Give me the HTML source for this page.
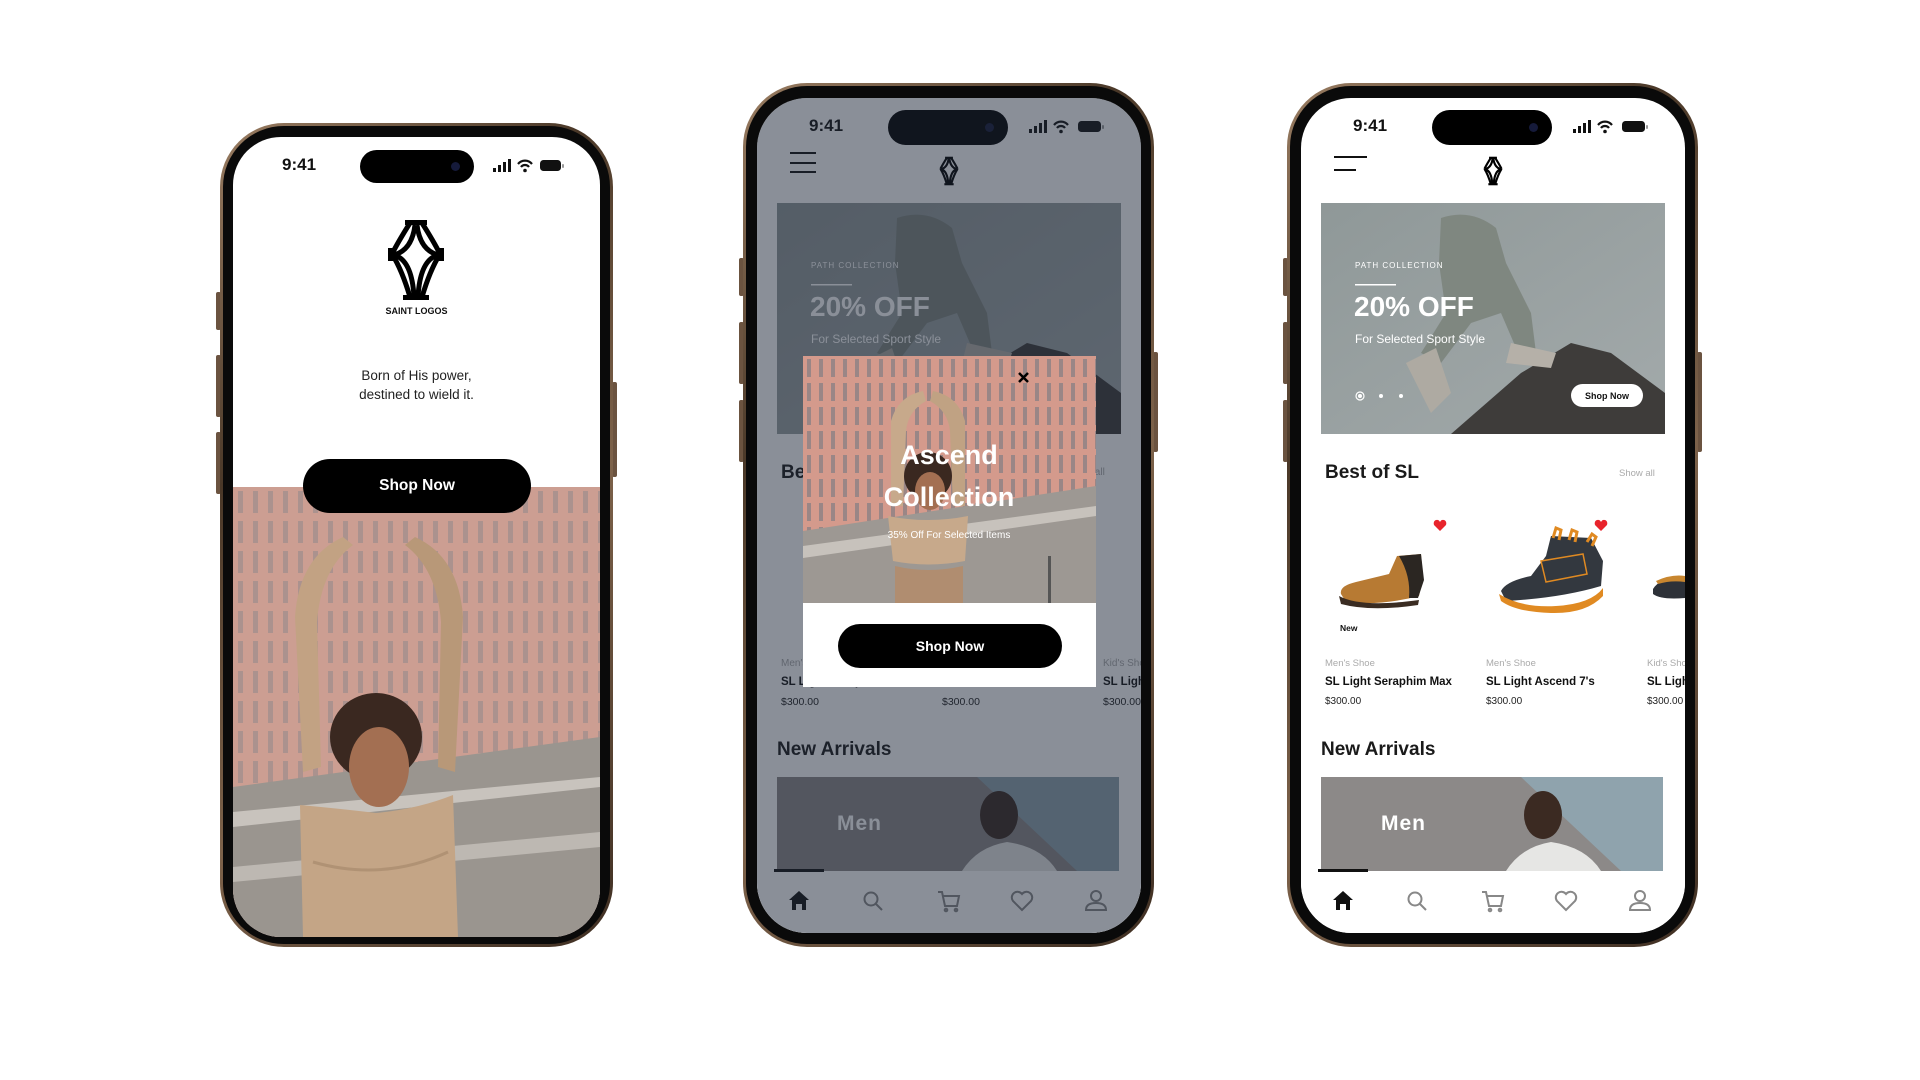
<!DOCTYPE html>
<html><head><meta charset="utf-8">
<style>
*{margin:0;padding:0;box-sizing:border-box}
body{width:1920px;height:1080px;background:#fff;position:relative;overflow:hidden;font-family:"Liberation Sans",sans-serif}
.frame{position:absolute;border-radius:64px;background:linear-gradient(135deg,#9a7d62,#4a3828 30%,#7d624a 60%,#3e2e22);padding:3px}
.frame>.inner{width:100%;height:100%;border-radius:61px;background:#0a0a0a}
.btn{position:absolute;background:#6b5340;border-radius:2px}
.screen{position:absolute;overflow:hidden;background:#fff;border-radius:50px}
.abs{position:absolute}
.time{position:absolute;font-weight:bold;font-size:17px;color:#111}
.island{position:absolute;background:#000;border-radius:18px}
.island:after{content:"";position:absolute;right:14px;top:50%;width:9px;height:9px;margin-top:-4.5px;border-radius:50%;background:#151a3a}
.pill{position:absolute;background:#000;color:#fff;border-radius:28px;font-weight:bold;text-align:center}
.lbl{position:absolute;font-size:10px;color:#aaa;white-space:nowrap}
.nm{position:absolute;font-size:11.5px;font-weight:bold;color:#111;white-space:nowrap}
.pr{position:absolute;font-size:10.5px;color:#222;white-space:nowrap}
.h2{position:absolute;font-size:19px;font-weight:bold;color:#1a1a1a}
</style></head><body>

<!-- ============ PHONE 1 ============ -->
<div class="btn" style="left:216px;top:292px;width:5px;height:38px"></div>
<div class="btn" style="left:216px;top:355px;width:5px;height:62px"></div>
<div class="btn" style="left:216px;top:432px;width:5px;height:62px"></div>
<div class="btn" style="left:612px;top:382px;width:5px;height:95px"></div>
<div class="frame" style="left:220px;top:123px;width:393px;height:824px"><div class="inner"></div></div>
<div class="screen" style="left:233px;top:137px;width:367px;height:800px;border-radius:48px">
  <div class="time" style="left:49px;top:18px">9:41</div>
  <div class="island" style="left:127px;top:13px;width:114px;height:33px"></div>
  <svg class="abs" style="left:260px;top:21px" width="76" height="16" viewBox="0 0 76 16">
    <rect x="0" y="10" width="3" height="4" fill="#111"/><rect x="5" y="7" width="3" height="7" fill="#111"/><rect x="10" y="4" width="3" height="10" fill="#111"/><rect x="15" y="1" width="3" height="13" fill="#111"/>
    <path d="M25 6 a9 9 0 0 1 14 0 M28 9 a5 5 0 0 1 8 0" stroke="#111" stroke-width="2.2" fill="none"/><circle cx="32" cy="12.5" r="1.8" fill="#111"/>
    <rect x="47" y="2" width="21" height="11" rx="3.5" fill="#111"/><rect x="69" y="6" width="2" height="4" rx="1" fill="#999"/>
  </svg>
  <svg class="abs" style="left:155px;top:83px" width="56" height="80" viewBox="0 0 56 80">
    <g fill="none" stroke="#000" stroke-width="5">
      <path d="M22 3 Q10 22 4 34 M34 3 Q46 22 52 34"/>
      <path d="M4 34 Q14 50 22 77 M52 34 Q42 50 34 77"/>
      <path d="M27 5 Q24 30 6 35 M29 5 Q32 30 50 35"/>
      <path d="M6 35 Q24 40 26 77 M50 35 Q32 40 30 77"/>
    </g>
    <rect x="17" y="0" width="22" height="5" fill="#000"/>
    <rect x="15" y="75" width="26" height="5" fill="#000"/>
    <rect x="0" y="28" width="5" height="13" fill="#000"/><rect x="51" y="28" width="5" height="13" fill="#000"/>
  </svg>
  <div class="abs" style="left:0;width:367px;top:169px;text-align:center;font-size:9px;font-weight:bold;color:#111">SAINT LOGOS</div>
  <div class="abs" style="left:0;width:367px;top:229px;text-align:center;font-size:13.5px;line-height:19px;color:#222">Born of His power,<br>destined to wield it.</div>
  <svg class="abs" style="left:0;top:350px" width="367" height="450" viewBox="0 0 367 450">
    <defs>
      <pattern id="win" width="15" height="30" patternUnits="userSpaceOnUse"><rect width="15" height="30" fill="#c99a8e"/><rect x="5" y="4" width="5" height="22" fill="#9a8888"/></pattern>
    </defs>
    <rect width="367" height="450" fill="url(#win)"/>
    <rect width="367" height="450" fill="#d4a89c" opacity="0.3"/>
    <path d="M0 300 L367 250 L367 450 L0 450Z" fill="#9a958f"/>
    <path d="M0 325 L367 290 L367 300 L0 340Z" fill="#c8c3bd"/>
    <path d="M0 380 L367 345 L367 360 L0 395Z" fill="#bdb8b2"/>
    <path d="M62 130 Q66 70 110 50 L120 58 Q88 82 84 135 L88 280 L70 285Z" fill="#c2a283"/>
    <path d="M230 130 Q226 70 182 50 L172 58 Q204 82 208 135 L205 280 L222 285Z" fill="#b89878"/>
    <ellipse cx="143" cy="250" rx="46" ry="44" fill="#3a2820"/>
    <ellipse cx="146" cy="280" rx="30" ry="40" fill="#a36f52"/>
    <path d="M67 318 Q110 322 143 326 Q185 322 220 308 L225 450 L70 450Z" fill="#c4a586"/>
    <path d="M80 375 Q150 395 215 365" stroke="#b09274" stroke-width="3" fill="none"/>
  </svg>
  <div class="pill" style="left:70px;top:322px;width:228px;height:54px;line-height:54px;font-size:15.5px">Shop Now</div>
</div>

<!-- ============ PHONE 2 ============ -->
<div class="btn" style="left:739px;top:258px;width:5px;height:38px"></div>
<div class="btn" style="left:739px;top:322px;width:5px;height:62px"></div>
<div class="btn" style="left:739px;top:400px;width:5px;height:62px"></div>
<div class="btn" style="left:1153px;top:352px;width:5px;height:100px"></div>
<div class="frame" style="left:743px;top:83px;width:411px;height:864px"><div class="inner"></div></div>
<div class="screen" style="left:757px;top:98px;width:384px;height:835px">
  <div class="time" style="left:52px;top:18px">9:41</div>
  <div class="island" style="left:131px;top:12px;width:120px;height:35px"></div>
  <svg class="abs" style="left:272px;top:21px" width="80" height="16" viewBox="0 0 80 16">
    <rect x="0" y="10" width="3" height="4" fill="#111"/><rect x="5" y="7" width="3" height="7" fill="#111"/><rect x="10" y="4" width="3" height="10" fill="#111"/><rect x="15" y="1" width="3" height="13" fill="#111"/>
    <path d="M25 6 a9 9 0 0 1 14 0 M28 9 a5 5 0 0 1 8 0" stroke="#111" stroke-width="2.2" fill="none"/><circle cx="32" cy="12.5" r="1.8" fill="#111"/>
    <rect x="49" y="2" width="23" height="11" rx="3.5" fill="#111"/><rect x="73" y="6" width="2" height="4" rx="1" fill="#999"/>
  </svg>
  <div class="abs" style="left:33px;top:54px;width:26px;height:2px;background:#111"></div>
  <div class="abs" style="left:33px;top:64px;width:26px;height:2px;background:#111"></div>
  <div class="abs" style="left:33px;top:73px;width:26px;height:2px;background:#111"></div>
  <svg class="abs" style="left:182px;top:58px" width="20" height="30" viewBox="0 0 56 80"><g fill="none" stroke="#000" stroke-width="6"><path d="M22 3 Q10 22 4 34 M34 3 Q46 22 52 34 M4 34 Q14 50 22 77 M52 34 Q42 50 34 77 M27 5 Q24 30 6 35 M29 5 Q32 30 50 35 M6 35 Q24 40 26 77 M50 35 Q32 40 30 77"/></g><rect x="17" y="0" width="22" height="6"/><rect x="15" y="74" width="26" height="6"/></svg>
  <svg class="abs" style="left:20px;top:105px" width="344" height="231" viewBox="0 0 344 231">
    <defs><linearGradient id="sky2" x1="0" y1="0" x2="1" y2="1"><stop offset="0" stop-color="#8f9898"/><stop offset="1" stop-color="#a3aaab"/></linearGradient></defs>
    <rect width="344" height="231" fill="url(#sky2)"/>
    <path d="M130 231 L200 170 L250 140 L290 150 L344 190 L344 231Z" fill="#3e3c3a"/>
    <path d="M120 15 Q150 5 175 25 L185 60 L210 110 L215 150 L195 145 L180 110 L150 120 L120 160 L100 150 L125 110 L118 60Z" fill="#7f8780"/>
    <path d="M85 160 L115 145 L130 190 L110 210Z" fill="#aeaaa2"/>
    <path d="M190 140 L235 150 L230 165 L185 160Z" fill="#b5b0a8"/>
    <text x="34" y="65" font-size="8" fill="#fff" letter-spacing="1">PATH COLLECTION</text>
    <rect x="34" y="81" width="41" height="1.5" fill="#fff"/>
    <text x="33" y="113" font-size="28" font-weight="bold" fill="#fff">20% OFF</text>
    <text x="34" y="140" font-size="12" fill="#fff">For Selected Sport Style</text>
  </svg>
  <div class="h2" style="left:24px;top:364px">Best of SL</div>
  <div class="abs" style="left:310px;top:369px;font-size:10px;color:#aaa">Show all</div>
  <div class="lbl" style="left:24px;top:560px">Men's Shoe</div>
  <div class="nm" style="left:24px;top:578px">SL Light Seraphim Max</div>
  <div class="pr" style="left:24px;top:598px">$300.00</div>
  <div class="pr" style="left:185px;top:598px">$300.00</div>
  <div class="lbl" style="left:346px;top:560px">Kid's Shoe</div>
  <div class="nm" style="left:346px;top:578px">SL Light</div>
  <div class="pr" style="left:346px;top:598px">$300.00</div>
  <div class="h2" style="left:20px;top:641px">New Arrivals</div>
  <svg class="abs" style="left:20px;top:679px" width="342" height="94" viewBox="0 0 342 94">
    <rect width="342" height="94" fill="#8c8988"/>
    <path d="M200 0 L342 0 L342 94 L300 94Z" fill="#8fa3ad"/>
    <path d="M185 94 Q200 70 230 65 Q265 70 280 94Z" fill="#e6e6e4"/>
    <ellipse cx="222" cy="38" rx="19" ry="24" fill="#3b2a22"/>
    <text x="60" y="53" font-size="21" font-weight="bold" fill="#fff" letter-spacing="1">Men</text>
  </svg>
  <div class="abs" style="left:0;top:773px;width:384px;height:62px;background:#fff"></div>
  <div class="abs" style="left:17px;top:771px;width:50px;height:3px;background:#111"></div>
  <svg class="abs" style="left:0;top:788px" width="384" height="30" viewBox="0 0 384 30">
    <path d="M32 14 L42 5 L52 14 L49 14 L49 24 L45 24 L45 18 L39 18 L39 24 L35 24 L35 14Z" fill="#111"/>
    <g fill="none" stroke="#888" stroke-width="2">
      <circle cx="114" cy="13" r="6.5"/><path d="M119 18 L125 24"/>
      <path d="M181 6 L185 6 L188 20 L200 20 L202 10 L186 10"/><circle cx="189" cy="24" r="1.3"/><circle cx="199" cy="24" r="1.3"/>
      <path d="M265 24 L256 15 A5 5 0 0 1 265 8 A5 5 0 0 1 274 15Z"/>
      <circle cx="339" cy="10" r="5"/><path d="M329 24 Q329 17 339 17 Q349 17 349 24Z"/>
    </g>
  </svg>
  <div class="abs" style="left:0;top:0;width:384px;height:835px;background:rgba(30,40,58,0.52)"></div>
  <div class="abs" style="left:46px;top:258px;width:293px;height:331px;background:#fff">
    <svg class="abs" style="left:0;top:0" width="293" height="247" viewBox="0 0 293 247">
      <defs><pattern id="win2" width="12" height="24" patternUnits="userSpaceOnUse"><rect width="12" height="24" fill="#d49a8c"/><rect x="4" y="3" width="4" height="18" fill="#9a8686"/></pattern></defs>
      <rect width="293" height="247" fill="url(#win2)"/>
      <path d="M0 175 L293 130 L293 247 L0 247Z" fill="#9d9893"/>
      <path d="M0 190 L293 150 L293 160 L0 202Z" fill="#c7c2bc"/>
      <path d="M88 65 Q95 40 120 35 L123 45 Q105 55 103 75 L100 150 L88 150Z" fill="#c7a98b"/>
      <path d="M162 65 Q155 40 130 35 L127 45 Q145 55 147 75 L150 150 L162 150Z" fill="#c0a283"/>
      <ellipse cx="125" cy="120" rx="24" ry="24" fill="#3a2820"/>
      <ellipse cx="127" cy="135" rx="15" ry="19" fill="#a36f52"/>
      <path d="M85 160 Q125 168 165 160 L162 205 Q125 212 90 205Z" fill="#c7a98b"/>
      <path d="M92 210 Q125 218 160 210 L160 247 L92 247Z" fill="#b08d70"/>
      <rect x="245" y="200" width="3" height="47" fill="#555"/>
      <path d="M216 17 L225 26 M225 17 L216 26" stroke="#000" stroke-width="2.5"/>
      <text x="146" y="108" text-anchor="middle" font-size="27" font-weight="bold" fill="#fff">Ascend</text>
      <text x="146" y="150" text-anchor="middle" font-size="27" font-weight="bold" fill="#fff">Collection</text>
      <text x="146" y="182" text-anchor="middle" font-size="10" fill="#fff">35% Off For Selected Items</text>
    </svg>
    <div class="pill" style="left:35px;top:268px;width:224px;height:44px;line-height:44px;font-size:14px;border-radius:22px">Shop Now</div>
  </div>
</div>

<!-- ============ PHONE 3 ============ -->
<div class="btn" style="left:1283px;top:258px;width:5px;height:38px"></div>
<div class="btn" style="left:1283px;top:322px;width:5px;height:62px"></div>
<div class="btn" style="left:1283px;top:400px;width:5px;height:62px"></div>
<div class="btn" style="left:1697px;top:352px;width:5px;height:100px"></div>
<div class="frame" style="left:1287px;top:83px;width:411px;height:864px"><div class="inner"></div></div>
<div class="screen" style="left:1301px;top:98px;width:384px;height:835px">
  <div class="time" style="left:52px;top:18px">9:41</div>
  <div class="island" style="left:131px;top:12px;width:120px;height:35px"></div>
  <svg class="abs" style="left:272px;top:21px" width="80" height="16" viewBox="0 0 80 16">
    <rect x="0" y="10" width="3" height="4" fill="#111"/><rect x="5" y="7" width="3" height="7" fill="#111"/><rect x="10" y="4" width="3" height="10" fill="#111"/><rect x="15" y="1" width="3" height="13" fill="#111"/>
    <path d="M25 6 a9 9 0 0 1 14 0 M28 9 a5 5 0 0 1 8 0" stroke="#111" stroke-width="2.2" fill="none"/><circle cx="32" cy="12.5" r="1.8" fill="#111"/>
    <rect x="49" y="2" width="23" height="11" rx="3.5" fill="#111"/><rect x="73" y="6" width="2" height="4" rx="1" fill="#999"/>
  </svg>
  <div class="abs" style="left:33px;top:58px;width:33px;height:2px;background:#111"></div>
  <div class="abs" style="left:33px;top:71px;width:22px;height:2px;background:#111"></div>
  <svg class="abs" style="left:182px;top:58px" width="20" height="30" viewBox="0 0 56 80"><g fill="none" stroke="#000" stroke-width="6"><path d="M22 3 Q10 22 4 34 M34 3 Q46 22 52 34 M4 34 Q14 50 22 77 M52 34 Q42 50 34 77 M27 5 Q24 30 6 35 M29 5 Q32 30 50 35 M6 35 Q24 40 26 77 M50 35 Q32 40 30 77"/></g><rect x="17" y="0" width="22" height="6"/><rect x="15" y="74" width="26" height="6"/></svg>
  <svg class="abs" style="left:20px;top:105px" width="344" height="231" viewBox="0 0 344 231">
    <defs><linearGradient id="sky3" x1="0" y1="0" x2="1" y2="1"><stop offset="0" stop-color="#8f9898"/><stop offset="1" stop-color="#a3aaab"/></linearGradient></defs>
    <rect width="344" height="231" fill="url(#sky3)"/>
    <path d="M130 231 L200 170 L250 140 L290 150 L344 190 L344 231Z" fill="#3e3c3a"/>
    <path d="M120 15 Q150 5 175 25 L185 60 L210 110 L215 150 L195 145 L180 110 L150 120 L120 160 L100 150 L125 110 L118 60Z" fill="#7f8780"/>
    <path d="M85 160 L115 145 L130 190 L110 210Z" fill="#aeaaa2"/>
    <path d="M190 140 L235 150 L230 165 L185 160Z" fill="#b5b0a8"/>
    <text x="34" y="65" font-size="8" fill="#fff" letter-spacing="1">PATH COLLECTION</text>
    <rect x="34" y="81" width="41" height="1.5" fill="#fff"/>
    <text x="33" y="113" font-size="28" font-weight="bold" fill="#fff">20% OFF</text>
    <text x="34" y="140" font-size="12" fill="#fff">For Selected Sport Style</text>
    <circle cx="39" cy="193" r="4" fill="none" stroke="#fff" stroke-width="1.2"/><circle cx="39" cy="193" r="2" fill="#fff"/>
    <circle cx="60" cy="193" r="2" fill="#fff"/><circle cx="80" cy="193" r="2" fill="#fff"/>
    <rect x="250" y="181" width="72" height="23" rx="11.5" fill="#fff"/>
    <text x="286" y="196" text-anchor="middle" font-size="9" font-weight="bold" fill="#111">Shop Now</text>
  </svg>
  <div class="h2" style="left:24px;top:364px">Best of SL</div>
  <div class="abs" style="left:318px;top:370px;font-size:9.5px;color:#aaa">Show all</div>
  <svg class="abs" style="left:0;top:418px" width="384" height="100" viewBox="0 0 384 100">
    <path d="M135 4 a3.5 3.5 0 0 1 4 2 a3.5 3.5 0 0 1 4 -2 a3.5 3.5 0 0 1 1 6 L139 15 L134 10 a3.5 3.5 0 0 1 1 -6Z" fill="#e8242c"/>
    <path d="M296 4 a3.5 3.5 0 0 1 4 2 a3.5 3.5 0 0 1 4 -2 a3.5 3.5 0 0 1 1 6 L300 15 L295 10 a3.5 3.5 0 0 1 1 -6Z" fill="#e8242c"/>
    <path d="M40 78 Q38 70 55 66 L88 58 L96 40 L120 38 L122 62 L118 80 Q80 90 45 86Z" fill="#b77a33"/>
    <path d="M98 40 L120 38 L123 64 L117 82 L108 82 Q110 60 98 40Z" fill="#2b2622"/>
    <path d="M38 80 Q60 92 118 84 L117 89 Q70 96 40 88Z" fill="#3a2c22"/>
    <path d="M200 75 Q205 65 230 60 L245 40 L250 20 L290 22 L302 45 L300 70 Q260 82 205 85Z" fill="#33383f"/>
    <path d="M198 78 Q220 92 255 90 Q290 88 302 72 L302 80 Q285 98 250 97 Q215 96 200 85Z" fill="#e08a22"/>
    <path d="M252 22 l3 -10 l5 2 l-2 10 M268 24 l3 -10 l5 2 l-2 10 M286 26 l5 -8 l4 3 l-4 9" stroke="#e08a22" stroke-width="3" fill="none"/>
    <path d="M240 45 L282 38 L286 58 L245 66Z" fill="none" stroke="#e08a22" stroke-width="1.5"/>
    <path d="M352 73 Q360 60 384 62 L384 82 Q360 84 352 78Z" fill="#2d3138"/>
    <path d="M355 65 Q370 58 384 60 L384 66 Q370 64 357 68Z" fill="#c8862f"/>
  </svg>
  <div class="abs" style="left:39px;top:525px;font-size:8.5px;font-weight:bold;color:#111">New</div>
  <div class="lbl" style="left:24px;top:560px;font-size:9.5px">Men's Shoe</div>
  <div class="nm" style="left:24px;top:578px">SL Light Seraphim Max</div>
  <div class="pr" style="left:24px;top:598px;font-size:10px">$300.00</div>
  <div class="lbl" style="left:185px;top:560px;font-size:9.5px">Men's Shoe</div>
  <div class="nm" style="left:185px;top:578px">SL Light Ascend 7's</div>
  <div class="pr" style="left:185px;top:598px;font-size:10px">$300.00</div>
  <div class="lbl" style="left:346px;top:560px;font-size:9.5px">Kid's Shoe</div>
  <div class="nm" style="left:346px;top:578px">SL Light</div>
  <div class="pr" style="left:346px;top:598px;font-size:10px">$300.00</div>
  <div class="h2" style="left:20px;top:641px">New Arrivals</div>
  <svg class="abs" style="left:20px;top:679px" width="342" height="94" viewBox="0 0 342 94">
    <rect width="342" height="94" fill="#8c8988"/>
    <path d="M200 0 L342 0 L342 94 L300 94Z" fill="#8fa3ad"/>
    <path d="M185 94 Q200 70 230 65 Q265 70 280 94Z" fill="#e6e6e4"/>
    <ellipse cx="222" cy="38" rx="19" ry="24" fill="#3b2a22"/>
    <text x="60" y="53" font-size="21" font-weight="bold" fill="#fff" letter-spacing="1">Men</text>
  </svg>
  <div class="abs" style="left:0;top:773px;width:384px;height:62px;background:#fff"></div>
  <div class="abs" style="left:17px;top:771px;width:50px;height:3px;background:#111"></div>
  <svg class="abs" style="left:0;top:788px" width="384" height="30" viewBox="0 0 384 30">
    <path d="M32 14 L42 5 L52 14 L49 14 L49 24 L45 24 L45 18 L39 18 L39 24 L35 24 L35 14Z" fill="#111"/>
    <g fill="none" stroke="#888" stroke-width="2">
      <circle cx="114" cy="13" r="6.5"/><path d="M119 18 L125 24"/>
      <path d="M181 6 L185 6 L188 20 L200 20 L202 10 L186 10"/><circle cx="189" cy="24" r="1.3"/><circle cx="199" cy="24" r="1.3"/>
      <path d="M265 24 L256 15 A5 5 0 0 1 265 8 A5 5 0 0 1 274 15Z"/>
      <circle cx="339" cy="10" r="5"/><path d="M329 24 Q329 17 339 17 Q349 17 349 24Z"/>
    </g>
  </svg>
</div>
</body></html>
